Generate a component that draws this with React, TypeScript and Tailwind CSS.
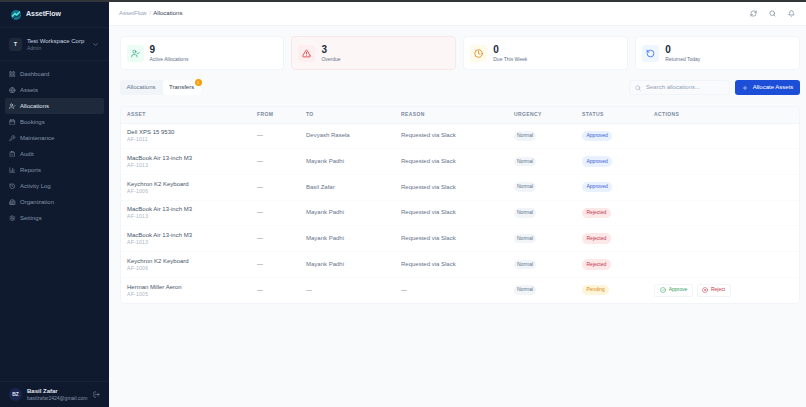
import React from 'react';
import {
  Bell, Building2, Calendar, ChartColumn, CheckCircle2, ChevronDown, ClipboardCheck, Clock, Globe, History,
  LayoutGrid, LogOut, Plus, RefreshCw, RotateCcw, Search, Settings, TriangleAlert, UserCheck,
  Wrench, XCircle,
} from 'lucide-react';

const font = { fontFamily: '"Liberation Sans", Arial, sans-serif' };

const navItems = [
  { label: 'Dashboard', icon: LayoutGrid },
  { label: 'Assets', icon: Globe },
  { label: 'Allocations', icon: UserCheck, active: true },
  { label: 'Bookings', icon: Calendar },
  { label: 'Maintenance', icon: Wrench },
  { label: 'Audit', icon: ClipboardCheck },
  { label: 'Reports', icon: ChartColumn },
  { label: 'Activity Log', icon: History },
  { label: 'Organization', icon: Building2 },
  { label: 'Settings', icon: Settings },
];

const rows = [
  { asset: 'Dell XPS 15 9530', tag: 'AF-1011', to: 'Devyash Rasela', reason: 'Requested via Slack', status: 'Approved' },
  { asset: 'MacBook Air 13-inch M3', tag: 'AF-1013', to: 'Mayank Padhi', reason: 'Requested via Slack', status: 'Approved' },
  { asset: 'Keychron K2 Keyboard', tag: 'AF-1006', to: 'Basil Zafar', reason: 'Requested via Slack', status: 'Approved' },
  { asset: 'MacBook Air 13-inch M3', tag: 'AF-1013', to: 'Mayank Padhi', reason: 'Requested via Slack', status: 'Rejected' },
  { asset: 'MacBook Air 13-inch M3', tag: 'AF-1013', to: 'Mayank Padhi', reason: 'Requested via Slack', status: 'Rejected' },
  { asset: 'Keychron K2 Keyboard', tag: 'AF-1006', to: 'Mayank Padhi', reason: 'Requested via Slack', status: 'Rejected' },
  { asset: 'Herman Miller Aeron', tag: 'AF-1005', to: '—', reason: '—', status: 'Pending' },
];

const statusStyles: Record<string, string> = {
  Approved: 'bg-[#e9f0fe] text-[#3b62d6]',
  Rejected: 'bg-[#fde8e8] text-[#c2364a]',
  Pending: 'bg-[#fef5d8] text-[#d98a1f]',
};

const Sidebar = () => (
  <aside className="w-[109px] shrink-0 bg-[#0f1a2e] flex flex-col text-[#8492a6]">
    <div className="h-[26px] flex items-center pl-[10px] gap-[4px] border-b border-[#172237]">
      <svg viewBox="0 0 24 24" className="w-[12px] h-[12px]">
        <circle cx="12" cy="12" r="10" fill="#0e7490" />
        <path d="M4 15 L10 9 L13 12 L20 5" stroke="#5eead4" strokeWidth="2.5" fill="none" />
        <path d="M6 20 L12 14 L15 16 L21 10" stroke="#0f1a2e" strokeWidth="1.5" fill="none" />
      </svg>
      <span className="text-[7px] font-bold text-[#e2e8f0]">AssetFlow</span>
    </div>
    <div className="h-[33px] flex items-center pl-[9px] pr-[10px] border-b border-[#172237]">
      <div className="w-[13px] h-[13px] rounded-[3px] bg-[#1e293b] text-[#e2e8f0] text-[5.5px] font-bold flex items-center justify-center">T</div>
      <div className="ml-[5px] flex-1 leading-none">
        <div className="text-[6px] text-[#cbd5e1] font-medium">Test Workspace Corp</div>
        <div className="text-[5px] text-[#64748b] mt-[2px]">Admin</div>
      </div>
      <ChevronDown className="w-[7px] h-[7px]" />
    </div>
    <nav className="flex-1 px-[5px] pt-[5px] flex flex-col">
      {navItems.map(({ label, icon: Icon, active }) => (
        <div
          key={label}
          className={`h-[16px] flex items-center gap-[4.5px] px-[4px] rounded-[2px] text-[6px] ${active ? 'bg-[#1e293b] text-[#e2e8f0]' : ''}`}
        >
          <Icon className="w-[6.5px] h-[6.5px]" />
          {label}
        </div>
      ))}
    </nav>
    <div className="h-[26px] border-t border-[#172237] flex items-center pl-[9px] pr-[9px] gap-[5px]">
      <div className="w-[13px] h-[13px] rounded-full bg-[#1a2550] text-[#e2e8f0] text-[5px] font-bold flex items-center justify-center">BZ</div>
      <div className="flex-1 leading-none min-w-0">
        <div className="text-[6px] text-[#e2e8f0] font-bold">Basil Zafar</div>
        <div className="text-[5px] text-[#8492a6] mt-[1.5px] whitespace-nowrap">basilzafar2424@gmail.com</div>
      </div>
      <LogOut className="w-[7px] h-[7px]" />
    </div>
  </aside>
);

const StatCard = ({ icon: Icon, value, label, iconBg, iconColor, danger }: any) => (
  <div className={`flex-1 h-[34px] rounded-[4px] border flex items-center px-[6px] gap-[6px] ${danger ? 'bg-[#fdf6f7] border-[#f9e6e8]' : 'bg-white border-[#f1f5f9]'}`}>
    <div className={`w-[17px] h-[17px] rounded-[3px] flex items-center justify-center ${iconBg}`}>
      <Icon className={`w-[9px] h-[9px] ${iconColor}`} />
    </div>
    <div className="leading-none">
      <div className="text-[10px] font-bold text-[#1e293b]">{value}</div>
      <div className="text-[5px] text-[#64748b] mt-[2px]">{label}</div>
    </div>
  </div>
);

const headers = ['Asset', 'From', 'To', 'Reason', 'Urgency', 'Status', 'Actions'];
const colWidths = ['w-[130px]', 'w-[49px]', 'w-[95px]', 'w-[113px]', 'w-[68px]', 'w-[72px]', ''];

export default function App() {
  return (
    <div className="h-screen w-full overflow-hidden flex flex-col bg-[#f8fafc]" style={font}>
      <div className="h-[2px] bg-[#333639] shrink-0" />
      <div className="flex flex-1 min-h-0">
        <Sidebar />
        <main className="flex-1 min-w-0 flex flex-col">
          <header className="h-[24px] shrink-0 bg-white border-b border-[#f1f5f9] flex items-center pl-[10px] pr-[11px]">
            <div className="text-[6px] text-[#94a3b8]">
              AssetFlow <span className="mx-[1px] text-[#cbd5e1]">/</span> <span className="text-[#334155]">Allocations</span>
            </div>
            <div className="ml-auto flex items-center gap-[12px] text-[#64748b]">
              <RefreshCw className="w-[7px] h-[7px]" />
              <Search className="w-[7px] h-[7px]" />
              <Bell className="w-[7px] h-[7px]" />
            </div>
          </header>

          <div className="pl-[10.5px] pr-[6px] pt-[10px]">
            <div className="flex gap-[7px]">
              <StatCard icon={UserCheck} value="9" label="Active Allocations" iconBg="bg-[#ecfdf5]" iconColor="text-[#34a583]" />
              <StatCard icon={TriangleAlert} value="3" label="Overdue" iconBg="bg-[#fdeef0]" iconColor="text-[#dc2626]" danger />
              <StatCard icon={Clock} value="0" label="Due This Week" iconBg="bg-[#fffbeb]" iconColor="text-[#d97706]" />
              <StatCard icon={RotateCcw} value="0" label="Returned Today" iconBg="bg-[#eff6ff]" iconColor="text-[#2563eb]" />
            </div>

            <div className="flex items-center mt-[10px] h-[15px]">
              <div className="relative flex items-center h-[15px] rounded-[3px] bg-[#f1f5f9] text-[6px]">
                <div className="px-[7px] text-[#64748b]">Allocations</div>
                <div className="h-full px-[6.5px] flex items-center bg-white rounded-[3px] text-[#334155] font-medium">Transfers</div>
                <div className="absolute -top-[1px] -right-[1px] w-[7px] h-[7px] rounded-full bg-[#f59e0b] text-white text-[4px] flex items-center justify-center">1</div>
              </div>
              <div className="ml-auto w-[101px] h-[15px] border border-[#f1f5f9] rounded-[3px] bg-[#f8fafc] flex items-center px-[5px] gap-[5px] text-[6px] text-[#94a3b8]">
                <Search className="w-[6px] h-[6px]" />
                Search allocations...
              </div>
              <button className="ml-[5px] w-[65px] h-[15px] rounded-[3px] bg-[#1d4ed8] text-white text-[6px] font-medium flex items-center justify-center gap-[5px]">
                <Plus className="w-[6px] h-[6px]" />
                Allocate Assets
              </button>
            </div>

            <div className="mt-[11px] bg-white rounded-[4px] border border-[#f1f5f9] overflow-hidden">
              <table className="w-full table-fixed border-collapse">
                <thead>
                  <tr className="h-[16px] bg-[#f8fafc] border-b border-[#f1f5f9]">
                    {headers.map((h, i) => (
                      <th key={h} className={`${colWidths[i]} pl-[6.5px] text-left text-[5px] font-bold uppercase tracking-[0.4px] text-[#7c8a9e]`}>{h}</th>
                    ))}
                  </tr>
                </thead>
                <tbody>
                  {rows.map((r, i) => (
                    <tr key={i} className={`h-[25.7px] text-[6px] text-[#64748b] ${i < rows.length - 1 ? 'border-b border-[#f8fafc]' : ''}`}>
                      <td className="pl-[6.5px] leading-none">
                        <div className="text-[#475569]">{r.asset}</div>
                        <div className="text-[5px] tracking-[0.3px] text-[#a8b3c2] mt-[2px]">{r.tag}</div>
                      </td>
                      <td className="pl-[6.5px]">—</td>
                      <td className="pl-[6.5px]">{r.to}</td>
                      <td className="pl-[6.5px]">{r.reason}</td>
                      <td className="pl-[6.5px]">
                        <span className="inline-block px-[3px] py-[1px] rounded-full bg-[#f1f5f9] text-[5px] text-[#64748b]">Normal</span>
                      </td>
                      <td className="pl-[6.5px]">
                        <span className={`inline-block px-[4.5px] py-[1.5px] rounded-full text-[5px] ${statusStyles[r.status]}`}>{r.status}</span>
                      </td>
                      <td className="pl-[6.5px]">
                        {r.status === 'Pending' && (
                          <div className="flex gap-[3.5px] text-[5px]">
                            <div className="h-[13px] w-[39px] flex items-center justify-center gap-[3px] rounded-[2px] border border-[#f1f5f9] text-[#2f9e5f]">
                              <CheckCircle2 className="w-[6px] h-[6px]" /> Approve
                            </div>
                            <div className="h-[13px] w-[34px] flex items-center justify-center gap-[3px] rounded-[2px] border border-[#f1f5f9] text-[#c2364a]">
                              <XCircle className="w-[6px] h-[6px]" /> Reject
                            </div>
                          </div>
                        )}
                      </td>
                    </tr>
                  ))}
                </tbody>
              </table>
            </div>
          </div>
        </main>
      </div>
    </div>
  );
}
